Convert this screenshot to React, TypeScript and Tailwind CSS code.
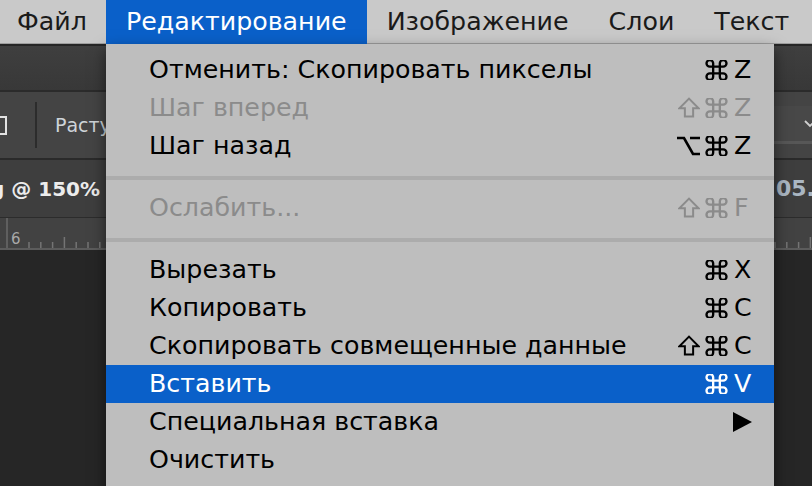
type MenuItem =
  | { kind: "item"; label: string; mods?: Mod[]; keyName?: string; disabled?: boolean; active?: boolean; submenu?: boolean }
  | { kind: "sep" };

type Mod = "cmd" | "shift" | "opt";

const menuBar = ["Файл", "Редактирование", "Изображение", "Слои", "Текст"];

const items: MenuItem[] = [
  { kind: "item", label: "Отменить: Скопировать пикселы", mods: ["cmd"], keyName: "Z" },
  { kind: "item", label: "Шаг вперед", mods: ["shift", "cmd"], keyName: "Z", disabled: true },
  { kind: "item", label: "Шаг назад", mods: ["opt", "cmd"], keyName: "Z" },
  { kind: "sep" },
  { kind: "item", label: "Ослабить...", mods: ["shift", "cmd"], keyName: "F", disabled: true },
  { kind: "sep" },
  { kind: "item", label: "Вырезать", mods: ["cmd"], keyName: "X" },
  { kind: "item", label: "Копировать", mods: ["cmd"], keyName: "C" },
  { kind: "item", label: "Скопировать совмещенные данные", mods: ["shift", "cmd"], keyName: "C" },
  { kind: "item", label: "Вставить", mods: ["cmd"], keyName: "V", active: true },
  { kind: "item", label: "Специальная вставка", submenu: true },
  { kind: "item", label: "Очистить" },
];

// key glyphs drawn as svg so they get the mac proportions
const ModIcon = ({ mod }: { mod: Mod }) => {
  if (mod === "cmd")
    return (
      <svg width="23" height="20" viewBox="2.5 3 19 18" fill="none" stroke="currentColor" strokeWidth="2.1">
        <path d="M15 6v12a3 3 0 1 0 3-3H6a3 3 0 1 0 3 3V6a3 3 0 1 0-3 3h12a3 3 0 1 0-3-3" />
      </svg>
    );
  if (mod === "shift")
    return (
      <svg width="22" height="21" viewBox="4 4 16 15" fill="none" stroke="currentColor" strokeWidth="1.45" strokeLinejoin="miter">
        <path d="M9 18v-6H5l7-7 7 7h-4v6H9z" />
      </svg>
    );
  return (
    <svg width="23" height="20" viewBox="0 0 23 20" fill="none" stroke="currentColor" strokeWidth="2.6">
      <path d="M0 2h7l9 16h7M13 2h10" />
    </svg>
  );
};

const Ruler = ({ width, start, major }: { width: number; start: number; major?: number }) => {
  const ticks: number[] = [];
  for (let x = start; x < width; x += 11.8) ticks.push(x);
  return (
    <svg width={width} height={30} className="block">
      {major !== undefined && <line x1={major} y1={0} x2={major} y2={30} stroke="#6a6a6a" strokeWidth={1.5} />}
      {ticks.map((x, i) => (
        <line key={i} x1={x} y1={i % 6 === 3 ? 19 : 24} x2={x} y2={30} stroke="#747474" strokeWidth={1.5} />
      ))}
    </svg>
  );
};

const Workspace = () => (
  <div className="flex flex-col">
    {/* app bar */}
    <div className="h-[46px] border-t-2 border-[#262626] bg-gradient-to-b from-[#3f3f3f] to-[#383838]" />
    <div className="h-[2px] bg-[#2b2b2b]" />
    {/* options bar */}
    <div className="h-[66px] bg-[#444444] flex items-center">
      <div className="w-[20px] h-[19px] ml-[-13px] border-2 border-[#e2e2e2]" />
      <div className="w-[2px] h-[46px] ml-[28px] bg-[#2c2c2c]" />
      <span className="ml-[18px] text-[19px] text-[#cfd4d8]">Растушевка:</span>
      <div className="ml-auto h-[38px] w-[60px] bg-[#484848] border-b-[3px] border-[#575757] flex items-center justify-end">
        <svg width="10" height="12" viewBox="0 0 10 12" className="mr-[-2px]">
          <path d="M1 3 L6 8 L11 3" fill="none" stroke="#d0d0d0" strokeWidth="1.8" />
        </svg>
      </div>
    </div>
    <div className="h-[2px] bg-[#2a2a2a]" />
    {/* document tabs */}
    <div className="h-[57px] bg-[#3e3e3e] flex items-center font-bold text-[20px]">
      <div className="w-[100px] flex justify-end overflow-hidden whitespace-nowrap">
        <span className="text-[#ececec]">IMG_2307.png @ 150%</span>
      </div>
      <div className="ml-auto w-[36px] overflow-hidden whitespace-nowrap">
        <span className="text-[#aab6c2] text-[22px]">05.png</span>
      </div>
    </div>
    <div className="h-[1px] bg-[#2c2c2c]" />
    {/* ruler */}
    <div className="h-[30px] bg-[#424242] flex relative">
      <Ruler width={106} start={29} major={7} />
      <span className="absolute left-[11px] top-[14px] text-[15px] leading-none text-[#a9a9a9]">6</span>
      <div className="ml-auto">
        <Ruler width={38} start={1} />
      </div>
    </div>
    <div className="h-[2px] bg-[#5c5c5c]" />
    <div className="h-[300px] bg-[#262626]" />
  </div>
);

const Shortcut = ({ mods, keyName }: { mods: Mod[]; keyName: string }) => (
  <div className="flex items-center">
    <div className="flex items-center gap-[5px]">
      {mods.map((m, i) => (
        <ModIcon key={i} mod={m} />
      ))}
    </div>
    <span className="w-[20px] ml-[6px]">{keyName}</span>
  </div>
);

const Menu = () => (
  <div className="absolute left-[106px] top-[44px] w-[668px] h-[450px] bg-[#bebebe] pt-[7px] shadow-[0_6px_14px_rgba(0,0,0,0.55)]">
    {items.map((it, i) => {
      if (it.kind === "sep")
        return (
          <div key={i} className="pt-[11px] pb-[9px]">
            <div className="h-[4px] bg-[#acacac]" />
          </div>
        );
      const color = it.active ? "text-white" : it.disabled ? "text-[#8b8b8b]" : "text-black";
      return (
        <div
          key={i}
          className={`h-[38px] flex items-center pl-[43px] pr-[20px] leading-none ${it.active ? "bg-[#0a60c9]" : ""} ${color}`}
        >
          <span>{it.label}</span>
          <div className="ml-auto">
            {it.mods && it.keyName && <Shortcut mods={it.mods} keyName={it.keyName} />}
            {it.submenu && (
              <svg width="19" height="20" viewBox="0 0 19 20" className="mr-[2px]">
                <polygon points="0,0 19,10 0,20" fill="#000" />
              </svg>
            )}
          </div>
        </div>
      );
    })}
  </div>
);

export default function App() {
  return (
    <div className="relative w-[812px] h-[486px] overflow-hidden bg-[#262626] font-['DejaVu_Sans',sans-serif] text-[25.3px]">
      <div className="h-[44px] bg-[#c9c9c9] border-b border-[#9e9e9e] flex leading-none">
        {menuBar.map((m, i) => (
          <div
            key={m}
            className={`h-[44px] flex items-center ${i === 0 ? "pl-[17px] pr-[19px]" : "px-[20px]"} ${
              i === 1 ? "bg-[#0a60c9] text-white" : "text-[#1a1a1a]"
            }`}
          >
            {m}
          </div>
        ))}
      </div>
      <Workspace />
      <Menu />
    </div>
  );
}
